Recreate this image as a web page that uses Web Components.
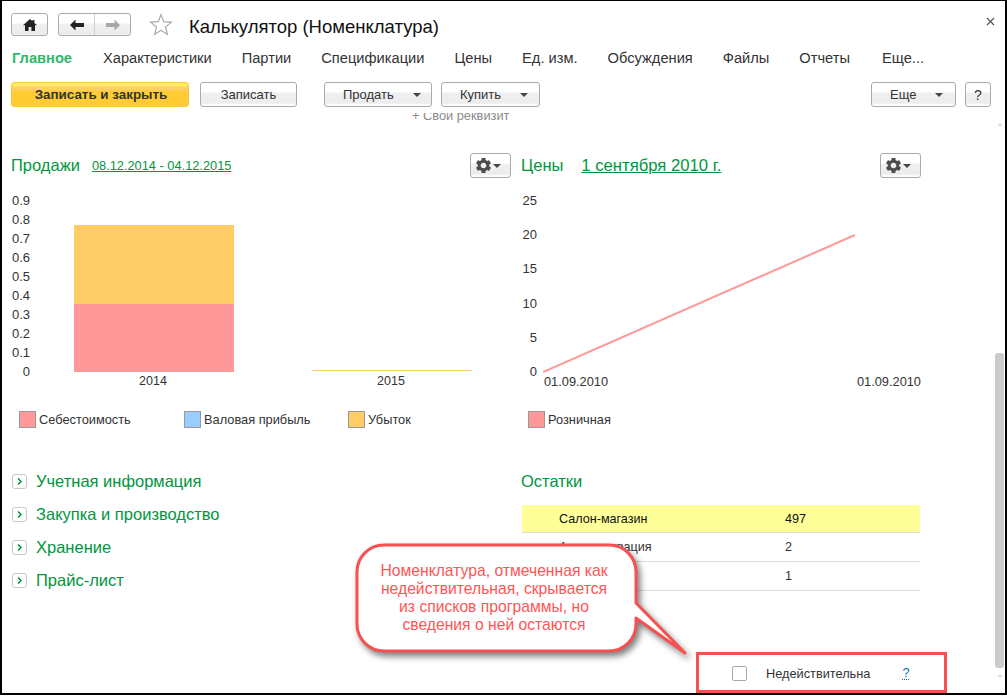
<!DOCTYPE html>
<html lang="ru">
<head>
<meta charset="utf-8">
<title>Калькулятор (Номенклатура)</title>
<style>
  html, body { margin: 0; padding: 0; background: #fff; }
  body { font-family: "Liberation Sans", Arial, sans-serif; color: #333; }
</style>
</head>
<body>
<item-window>
  <item-titlebar slot="top">Калькулятор (Номенклатура)</item-titlebar>
  <item-tabs slot="top"></item-tabs>
  <item-toolbar slot="top"></item-toolbar>

  <clipped-link>+ Свой реквизит</clipped-link>

  <two-columns>
    <chart-panel slot="left" title-text="Продажи" link="08.12.2014 - 04.12.2015" link-size="12.8" link-gap="12">
      <sales-chart></sales-chart>
    </chart-panel>
    <chart-panel slot="right" title-text="Цены" link="1 сентября 2010 г." link-size="16.67" link-gap="18">
      <price-chart></price-chart>
    </chart-panel>
    <group-list slot="left"></group-list>
    <stock-table slot="right"></stock-table>
  </two-columns>

  <item-footer>Недействительна</item-footer>

  <note-callout slot="over">Номенклатура, отмеченная как<br>недействительная, скрывается<br>из списков программы, но<br>сведения о ней остаются</note-callout>
</item-window>

<script>
const GREEN = '#009640';

class PlainButton extends HTMLElement {
  connectedCallback() {
    const arrow = this.hasAttribute('menu') ? '<i></i>' : '';
    this.attachShadow({ mode: 'open' });
    this.shadowRoot.innerHTML = `
      <style>
        :host {
          display: flex;
          box-sizing: border-box;
          height: 25px;
          align-items: center;
          justify-content: center;
          border: 1px solid #ababab;
          border-radius: 3px;
          background: linear-gradient(#fff 0, #fff 9px, #f0f0f0 10px, #ececec 20px, #fff 22px);
          font-size: 13px;
          color: #333;
          flex: none;
        }
        :host([menu]) {
          justify-content: flex-start;
          padding-left: 18px;
          gap: 19px;
        }
        :host([primary]) {
          border: 1px solid #f7c93a;
          background: linear-gradient(#ffef5c 0, #ffef5c 3px, #ffd068 4px, #ffd068 7px, #ffcc33 8px);
          font-size: 13.4px;
          font-weight: 700;
          color: #333;
          padding-left: 2px;
        }
        i {
          width: 0;
          height: 0;
          border: 4px solid transparent;
          border-top: 4px solid #444;
          border-bottom: 0;
        }
      </style>
      <slot></slot>${arrow}
    `;
  }
}
customElements.define('plain-button', PlainButton);

class ItemTitlebar extends HTMLElement {
  connectedCallback() {
    this.attachShadow({ mode: 'open' });
    this.shadowRoot.innerHTML = `
      <style>
        :host {
          display: flex;
          align-items: center;
          height: 23px;
          padding: 12px 0 0 9px;
          position: relative;
        }
        .box {
          box-sizing: border-box;
          height: 23px;
          border: 1px solid #ababab;
          border-radius: 3px;
          background: linear-gradient(#fff 0, #fff 9px, #f0f0f0 10px, #ececec 20px, #fff 22px);
          display: flex;
          flex: none;
        }
        .home { width: 37px; align-items: center; justify-content: center; }
        .nav { width: 73px; margin-left: 10px; }
        .nav span { flex: 1; display: flex; align-items: center; justify-content: center; }
        .nav span + span { border-left: 1px solid #d0d0d0; }
        .star { margin-left: 18px; display: block; }
        h1 {
          margin: 3px 0 0 16px;
          font-size: 18.5px;
          font-weight: 400;
          color: #111;
          line-height: 23px;
          white-space: nowrap;
        }
        .close { position: absolute; right: 10px; top: 16px; display: block; }
      </style>
      <div class="box home">
        <svg width="16" height="14" viewBox="0 0 16 14"><path d="M8 1 1 7.3h2V13h3.6V9h2.8v4H13V7.3h2L12.4 5V2h-1.9v1.3z" fill="#222"/></svg>
      </div>
      <div class="box nav">
        <span><svg width="16" height="12" viewBox="0 0 16 12"><path d="M6.5 0.5 1 6l5.5 5.5V8H15V4H6.5z" fill="#222"/></svg></span>
        <span><svg width="16" height="12" viewBox="0 0 16 12"><path d="M9.5 0.5 15 6l-5.5 5.5V8H1V4h8.5z" fill="#a8a8a8"/></svg></span>
      </div>
      <svg class="star" width="24" height="23" viewBox="0 0 24 23"><path d="M12 1.6 14.8 8.6 22.4 9.1 16.5 14 18.4 21.4 12 17.3 5.6 21.4 7.5 14 1.6 9.1 9.2 8.6z" fill="#fff" stroke="#a9a9a9" stroke-width="1.2"/></svg>
      <h1><slot></slot></h1>
      <svg class="close" width="9" height="9" viewBox="0 0 9 9"><path d="M1 1 8 8M8 1 1 8" stroke="#555" stroke-width="1.2"/></svg>
    `;
  }
}
customElements.define('item-titlebar', ItemTitlebar);

class ItemTabs extends HTMLElement {
  connectedCallback() {
    const names = ['Характеристики', 'Партии', 'Спецификации', 'Цены', 'Ед. изм.', 'Обсуждения', 'Файлы', 'Отчеты', 'Еще...'];
    this.attachShadow({ mode: 'open' });
    this.shadowRoot.innerHTML = `
      <style>
        :host {
          display: flex;
          gap: 30px;
          padding: 13px 0 0 10px;
          height: 20px;
          line-height: 18px;
          font-size: 14.67px;
          color: #333;
          white-space: nowrap;
        }
        b { color: #2eb868; font-size: 14.67px; width: 61px; }
        span:last-of-type { margin-left: 2px; }
      </style>
      <b>Главное</b>
      ${names.map(n => `<span>${n}</span>`).join('')}
    `;
  }
}
customElements.define('item-tabs', ItemTabs);

class ItemToolbar extends HTMLElement {
  connectedCallback() {
    this.attachShadow({ mode: 'open' });
    this.shadowRoot.innerHTML = `
      <style>
        :host {
          display: flex;
          align-items: center;
          padding: 13px 14px 0 9px;
          height: 25px;
        }
        .a { width: 178px; }
        .b { width: 97px; margin-left: 11px; }
        .c { width: 108px; margin-left: 27px; }
        .d { width: 99px; margin-left: 9px; }
        .e { width: 85px; margin-left: auto; }
        .f { width: 26px; margin-left: 9px; font-size: 14px; }
      </style>
      <plain-button class="a" primary>Записать и закрыть</plain-button>
      <plain-button class="b">Записать</plain-button>
      <plain-button class="c" menu>Продать</plain-button>
      <plain-button class="d" menu>Купить</plain-button>
      <plain-button class="e" menu>Еще</plain-button>
      <plain-button class="f">?</plain-button>
    `;
  }
}
customElements.define('item-toolbar', ItemToolbar);

class ClippedLink extends HTMLElement {
  connectedCallback() {
    this.attachShadow({ mode: 'open' });
    this.shadowRoot.innerHTML = `
      <style>
        :host {
          display: block;
          height: 10px;
          overflow: hidden;
          padding-left: 410px;
          font-size: 12.8px;
          line-height: 6px;
          color: #8a8a8a;
        }
      </style>
      <slot></slot>
    `;
  }
}
customElements.define('clipped-link', ClippedLink);

class TwoColumns extends HTMLElement {
  connectedCallback() {
    this.attachShadow({ mode: 'open' });
    this.shadowRoot.innerHTML = `
      <style>
        :host {
          display: flex;
          gap: 10px;
          padding: 30px 0 0 9px;
        }
        .left { width: 500px; }
        .right { width: 400px; }
      </style>
      <div class="left"><slot name="left"></slot></div>
      <div class="right"><slot name="right"></slot></div>
    `;
  }
}
customElements.define('two-columns', TwoColumns);

class ChartPanel extends HTMLElement {
  connectedCallback() {
    const size = this.getAttribute('link-size');
    const gap = this.getAttribute('link-gap');
    this.attachShadow({ mode: 'open' });
    this.shadowRoot.innerHTML = `
      <style>
        :host { display: block; height: 312px; color: ${GREEN}; }
        header { display: flex; align-items: center; height: 25px; }
        h2 { margin: 0 ${gap}px 0 0; font-size: 16.5px; font-weight: 400; }
        a { font-size: ${size}px; color: ${GREEN}; text-decoration: underline; }
        .gear {
          box-sizing: border-box;
          width: 41px;
          height: 25px;
          margin-left: auto;
          padding-left: 3px;
          border: 1px solid #ababab;
          border-radius: 3px;
          background: linear-gradient(#fff 0, #fff 9px, #f0f0f0 10px, #ececec 20px, #fff 22px);
          display: flex;
          align-items: center;
        }
        i {
          width: 0;
          height: 0;
          border: 4px solid transparent;
          border-top: 4px solid #444;
          border-bottom: 0;
        }
      </style>
      <header>
        <h2>${this.getAttribute('title-text')}</h2>
        <a>${this.getAttribute('link')}</a>
        <div class="gear">
          <svg width="19" height="19" viewBox="0 0 24 24"><path fill="#4d4d4d" d="M19.14 12.94c.04-.3.06-.61.06-.94 0-.32-.02-.64-.07-.94l2.03-1.58c.18-.14.23-.41.12-.61l-1.92-3.32c-.12-.22-.37-.29-.59-.22l-2.39.96c-.5-.38-1.03-.7-1.62-.94l-.36-2.54c-.04-.24-.24-.41-.48-.41h-3.84c-.24 0-.43.17-.47.41l-.36 2.54c-.59.24-1.13.57-1.62.94l-2.39-.96c-.22-.08-.47 0-.59.22L2.74 8.87c-.12.21-.08.47.12.61l2.03 1.58c-.05.3-.09.63-.09.94s.02.64.07.94l-2.03 1.58c-.18.14-.23.41-.12.61l1.92 3.32c.12.22.37.29.59.22l2.39-.96c.5.38 1.03.7 1.62.94l.36 2.54c.05.24.24.41.48.41h3.84c.24 0 .44-.17.47-.41l.36-2.54c.59-.24 1.13-.56 1.62-.94l2.39.96c.22.08.47 0 .59-.22l1.92-3.32c.12-.22.07-.47-.12-.61l-2.01-1.58zM12 15.6c-1.98 0-3.6-1.62-3.6-3.6s1.62-3.6 3.6-3.6 3.6 1.62 3.6 3.6-1.62 3.6-3.6 3.6z"/></svg>
          <i></i>
        </div>
      </header>
      <slot></slot>
    `;
  }
}
customElements.define('chart-panel', ChartPanel);

const legendCss = `
  .legend { display: flex; font-size: 12.8px; color: #333; height: 17px; align-items: center; }
  .legend span { display: flex; align-items: center; gap: 3px; flex: none; }
  .legend u { box-sizing: border-box; display: block; width: 17px; height: 17px; border: 1px solid #999; }
`;

class SalesChart extends HTMLElement {
  connectedCallback() {
    const ticks = ['0.9', '0.8', '0.7', '0.6', '0.5', '0.4', '0.3', '0.2', '0.1', '0'];
    this.attachShadow({ mode: 'open' });
    this.shadowRoot.innerHTML = `
      <style>
        :host { display: block; padding-top: 13px; font-size: 13px; color: #333; }
        .chart { display: flex; height: 199px; }
        .y { width: 19px; text-align: right; }
        .y div { height: 19px; line-height: 19px; }
        .plot { margin-left: 44px; display: flex; gap: 78px; }
        .col { width: 160px; display: flex; flex-direction: column; }
        .bars { height: 182px; display: flex; flex-direction: column; justify-content: flex-end; }
        .o { height: 79px; background: #ffcc66; }
        .p { height: 68px; background: #ff9999; }
        .z { height: 1px; background: #ffcc66; margin-bottom: 1px; }
        .col em { font-style: normal; font-size: 12.5px; text-align: center; line-height: 18px; padding-right: 2px; }
        ${legendCss}
        .legend { margin: 21px 0 0 8px; }
        .legend span:nth-child(1) { width: 165px; }
        .legend span:nth-child(2) { width: 164px; }
      </style>
      <div class="chart">
        <div class="y">${ticks.map(t => `<div>${t}</div>`).join('')}</div>
        <div class="plot">
          <div class="col"><div class="bars"><div class="o"></div><div class="p"></div></div><em>2014</em></div>
          <div class="col"><div class="bars"><div class="z"></div></div><em>2015</em></div>
        </div>
      </div>
      <div class="legend">
        <span><u style="background:#ff9999"></u>Себестоимость</span>
        <span><u style="background:#99ccff"></u>Валовая прибыль</span>
        <span><u style="background:#ffcc66"></u>Убыток</span>
      </div>
    `;
  }
}
customElements.define('sales-chart', SalesChart);

class PriceChart extends HTMLElement {
  connectedCallback() {
    const ticks = ['25', '20', '15', '10', '5', '0'];
    this.attachShadow({ mode: 'open' });
    this.shadowRoot.innerHTML = `
      <style>
        :host { display: block; padding-top: 13px; font-size: 13px; color: #333; }
        .chart { display: flex; height: 199px; }
        .y { width: 16px; text-align: right; }
        .y div { height: 34.2px; line-height: 20px; }
        .plot { margin-left: 6px; width: 378px; }
        svg { display: block; }
        .x { display: flex; justify-content: space-between; font-size: 12.8px; line-height: 18px; padding-left: 1px; }
        ${legendCss}
        .legend { margin: 21px 0 0 7px; }
      </style>
      <div class="chart">
        <div class="y">${ticks.map(t => `<div>${t}</div>`).join('')}</div>
        <div class="plot">
          <svg width="378" height="182" viewBox="0 0 378 182"><path d="M0 181 312 44" stroke="#ff9999" stroke-width="2" fill="none"/></svg>
          <div class="x"><span>01.09.2010</span><span>01.09.2010</span></div>
        </div>
      </div>
      <div class="legend"><span><u style="background:#ff9999"></u>Розничная</span></div>
    `;
  }
}
customElements.define('price-chart', PriceChart);

class GroupList extends HTMLElement {
  connectedCallback() {
    const names = ['Учетная информация', 'Закупка и производство', 'Хранение', 'Прайс-лист'];
    this.attachShadow({ mode: 'open' });
    this.shadowRoot.innerHTML = `
      <style>
        :host { display: block; color: ${GREEN}; font-size: 16.5px; }
        div { display: flex; align-items: center; height: 33px; }
        svg { flex: none; margin: 0 9px 0 1px; display: block; }
      </style>
      ${names.map(n => `<div>
        <svg width="15" height="15" viewBox="0 0 15 15"><rect x=".5" y=".5" width="14" height="14" rx="2.5" fill="#fff" stroke="#c8c8c8"/><path d="M6 4.5 9 7.5 6 10.5" fill="none" stroke="${GREEN}" stroke-width="1.5"/></svg>
        ${n}</div>`).join('')}
    `;
  }
}
customElements.define('group-list', GroupList);

class StockTable extends HTMLElement {
  connectedCallback() {
    const rows = [['Салон-магазин', '497'], ['Администрация', '2'], ['', '1']];
    this.attachShadow({ mode: 'open' });
    this.shadowRoot.innerHTML = `
      <style>
        :host { display: block; }
        h2 { margin: 0; height: 33px; line-height: 33px; font-size: 16.5px; font-weight: 400; color: ${GREEN}; }
        .row {
          display: grid;
          grid-template-columns: 226px 1fr;
          margin: 0 1px;
          padding-left: 37px;
          height: 28px;
          line-height: 29px;
          font-size: 12.6px;
          color: #333;
          border-bottom: 1px solid #dcdcdc;
        }
        .row:first-of-type { background: #ffff99; color: #111; height: 27px; line-height: 28px; margin-top: 7px; }
      </style>
      <h2>Остатки</h2>
      ${rows.map(r => `<div class="row"><span>${r[0]}</span><span>${r[1]}</span></div>`).join('')}
    `;
  }
}
customElements.define('stock-table', StockTable);

class ItemFooter extends HTMLElement {
  connectedCallback() {
    this.attachShadow({ mode: 'open' });
    this.shadowRoot.innerHTML = `
      <style>
        :host {
          display: flex;
          align-items: center;
          height: 16px;
          margin-top: auto;
          padding: 0 0 12px 730px;
          font-size: 12.75px;
          color: #333;
        }
        u {
          box-sizing: border-box;
          width: 15px;
          height: 15px;
          border: 1px solid #a8a8a8;
          border-radius: 2px;
          margin-right: 19px;
          flex: none;
        }
        a {
          margin-left: 32px;
          color: #0a6fb8;
          text-decoration: none;
          border-bottom: 1px dotted #0a6fb8;
          line-height: 13px;
        }
      </style>
      <u></u><slot></slot><a>?</a>
    `;
  }
}
customElements.define('item-footer', ItemFooter);

class ItemScrollbar extends HTMLElement {
  connectedCallback() {
    this.attachShadow({ mode: 'open' });
    this.shadowRoot.innerHTML = `
      <style>
        :host {
          display: flex;
          flex-direction: column;
          align-items: center;
          width: 9px;
          margin-right: 1px;
          padding: 10px 0 15px;
          flex: none;
        }
        i { width: 0; height: 0; border: 3px solid transparent; border-top: 0; border-bottom: 3px solid #ddd; }
        i.down { border-top: 3px solid #ddd; border-bottom: 0; margin-top: 7px; }
        b { display: block; width: 9px; height: 315px; margin-top: auto; background: #cbcbcb; border-radius: 3px; }
      </style>
      <i></i><b></b><i class="down"></i>
    `;
  }
}
customElements.define('item-scrollbar', ItemScrollbar);

class NoteCallout extends HTMLElement {
  connectedCallback() {
    this.attachShadow({ mode: 'open' });
    this.shadowRoot.innerHTML = `
      <style>
        :host { display: block; position: absolute; left: 0; top: 0; width: 0; height: 0; }
        svg { position: absolute; left: 348px; top: 537px; filter: drop-shadow(3px 4px 3px rgba(0, 0, 0, .5)); }
        .text {
          position: absolute;
          left: 352px;
          top: 561px;
          width: 280px;
          text-align: center;
          font-size: 15.7px;
          line-height: 18px;
          color: #ff5555;
          white-space: nowrap;
        }
        .mark {
          position: absolute;
          box-sizing: border-box;
          left: 694px;
          top: 651px;
          width: 251px;
          height: 41px;
          border: 3px solid #f75050;
        }
      </style>
      <svg width="345" height="125" viewBox="350 538 345 125"><path d="M384 545H609A27 27 0 0 1 636 572V603L685 653 636 618V624A27 27 0 0 1 609 651H384A27 27 0 0 1 357 624V572A27 27 0 0 1 384 545Z" fill="#fff" stroke="#f75050" stroke-width="3" stroke-linejoin="round"/></svg>
      <div class="text"><slot></slot></div>
      <div class="mark"></div>
    `;
  }
}
customElements.define('note-callout', NoteCallout);

class ItemWindow extends HTMLElement {
  connectedCallback() {
    this.attachShadow({ mode: 'open' });
    this.shadowRoot.innerHTML = `
      <style>
        :host {
          display: flex;
          flex-direction: column;
          box-sizing: border-box;
          position: relative;
          width: 1007px;
          height: 695px;
          border: 2px solid #000;
          border-top-width: 1px;
          background: #fff;
          overflow: hidden;
        }
        .body { flex: 1; min-height: 0; display: flex; margin-top: 6px; }
        .content { flex: 1; min-width: 0; display: flex; flex-direction: column; }
      </style>
      <slot name="top"></slot>
      <div class="body">
        <div class="content"><slot></slot></div>
        <item-scrollbar></item-scrollbar>
      </div>
      <slot name="over"></slot>
    `;
  }
}
customElements.define('item-window', ItemWindow);
</script>
</body>
</html>
